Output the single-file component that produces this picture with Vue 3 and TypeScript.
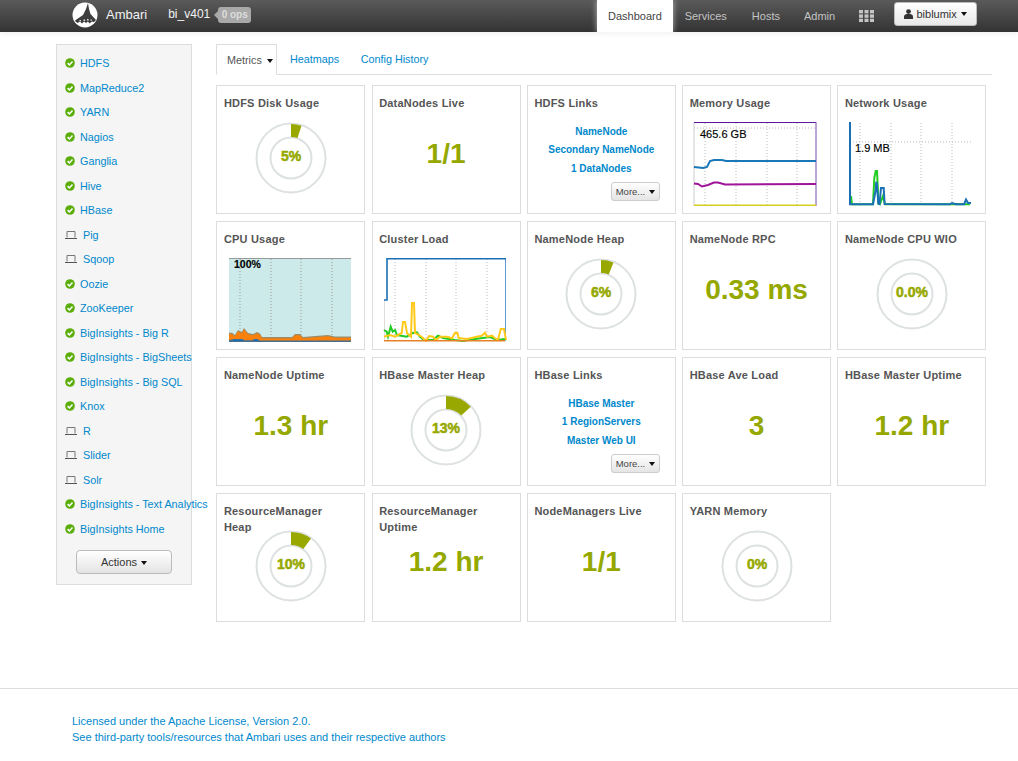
<script setup lang="ts">
interface Service { name: string; ok: boolean }
const services: Service[] = [
  { name: 'HDFS', ok: true }, { name: 'MapReduce2', ok: true }, { name: 'YARN', ok: true },
  { name: 'Nagios', ok: true }, { name: 'Ganglia', ok: true }, { name: 'Hive', ok: true },
  { name: 'HBase', ok: true }, { name: 'Pig', ok: false }, { name: 'Sqoop', ok: false },
  { name: 'Oozie', ok: true }, { name: 'ZooKeeper', ok: true }, { name: 'BigInsights - Big R', ok: true },
  { name: 'BigInsights - BigSheets', ok: true }, { name: 'BigInsights - Big SQL', ok: true },
  { name: 'Knox', ok: true }, { name: 'R', ok: false }, { name: 'Slider', ok: false }, { name: 'Solr', ok: false },
  { name: 'BigInsights - Text Analytics', ok: true }, { name: 'BigInsights Home', ok: true }
]

interface Widget {
  title: string
  kind: 'donut' | 'big' | 'links' | 'memory' | 'network' | 'cpu' | 'cluster'
  pct?: number
  label?: string
  links?: string[]
}
const widgets: Widget[] = [
  { title: 'HDFS Disk Usage', kind: 'donut', pct: 5, label: '5%' },
  { title: 'DataNodes Live', kind: 'big', label: '1/1' },
  { title: 'HDFS Links', kind: 'links', links: ['NameNode', 'Secondary NameNode', '1 DataNodes'] },
  { title: 'Memory Usage', kind: 'memory' },
  { title: 'Network Usage', kind: 'network' },
  { title: 'CPU Usage', kind: 'cpu' },
  { title: 'Cluster Load', kind: 'cluster' },
  { title: 'NameNode Heap', kind: 'donut', pct: 6, label: '6%' },
  { title: 'NameNode RPC', kind: 'big', label: '0.33 ms' },
  { title: 'NameNode CPU WIO', kind: 'donut', pct: 0, label: '0.0%' },
  { title: 'NameNode Uptime', kind: 'big', label: '1.3 hr' },
  { title: 'HBase Master Heap', kind: 'donut', pct: 13, label: '13%' },
  { title: 'HBase Links', kind: 'links', links: ['HBase Master', '1 RegionServers', 'Master Web UI'] },
  { title: 'HBase Ave Load', kind: 'big', label: '3' },
  { title: 'HBase Master Uptime', kind: 'big', label: '1.2 hr' },
  { title: 'ResourceManager Heap', kind: 'donut', pct: 10, label: '10%' },
  { title: 'ResourceManager Uptime', kind: 'big', label: '1.2 hr' },
  { title: 'NodeManagers Live', kind: 'big', label: '1/1' },
  { title: 'YARN Memory', kind: 'donut', pct: 0, label: '0%' }
]

function wedge(pct: number): string {
  const a = (pct / 100) * Math.PI * 2
  const cx = 40, cy = 40, ro = 34, ri = 21
  const s = Math.sin(a), c = Math.cos(a)
  const large = pct > 50 ? 1 : 0
  return `M${cx} ${cy - ro}A${ro} ${ro} 0 ${large} 1 ${cx + ro * s} ${cy - ro * c}L${cx + ri * s} ${cy - ri * c}A${ri} ${ri} 0 ${large} 0 ${cx} ${cy - ri}Z`
}

const memBlue = '694,167 703,168 707,167 710,161 714,160 722,160 726,161 816,161'
const memPurple = '694,183.5 698,184 702,186.5 708,185 714,182.5 718,182.5 725,184.5 816,184'
const netGreen = '851,196 852,204.3 873,204.3 874.3,178 875.7,171 877,171 878.5,204 880,204 883,196 885,204.3 950,204.3 952,204 970,204.3'
const netBlue = '850,122 850,204.3 873,204.3 875.7,190 876.3,181.7 877,185 878.3,203.3 879.5,204 881,188 883.7,188 884.6,204 950,204.3 952,203 956,204.3 964,204.3 966,199.5 968,203 971,203'
const cpuTop = '229,332.7 232,332.7 235,335 238,330 241.7,332 244,328 248,333 253,334 257,332 260,333.5 262,337 292,337 295,334 300,334 303,337 315,336 328,335 335,336.5 351,336.5'
const cpuGrey = `229,342 ${cpuTop} 351,342`
const cpuOrange = '229,341 229,334 232,334 235,336.3 238,331.3 241.7,333.3 244,329.3 248,334.3 253,335.3 257,333.3 260,334.8 262,338.3 292,338.3 295,335.3 300,335.3 303,338.3 315,337.3 328,336.3 335,337.8 351,337.8 351,341'
const cpuBlue = '229,342 229,340 233,339.2 243,339.5 245,340.3 252,340.3 254,339.2 258,339.5 260,340.5 351,340.5 351,342'
const clusterGreen = '384,330 386.7,331.7 388,336.7 390.7,326.7 392.7,331.7 395,330 397,335 406.7,336.7 413,333 417,332.3 420,336.7 424,340 433,340 438,335.7 443,338 455,340 463,341 475,339 490,337 497,340 505,339'
const clusterYellow = '384,336.7 390,335 395,336.7 401.7,333 403,322 405,322 407,333 411,336.7 412,303 414,303 415,333 421.7,336.7 426,341 429,336 433,336.7 436,340 440,336.7 447,336.7 452,338.3 455,332.7 457.3,332.7 458.7,338 467,339 476.7,336.7 481.7,335.7 485,332.7 487,336.7 492,335.7 495,338.3 498,340 500.7,329 504,329 506,340'
</script>

<template>
  <div class="page">
    <header class="nav">
      <svg class="logo" width="26" height="26" viewBox="0 0 26 26">
        <circle cx="13" cy="13" r="12.5" fill="#fff" />
        <path d="M16 1 L17 7 L18.5 12 L24 18 L22 20 C18 23 8 23 4 20 L3 18.5 L11 13 L14 7 Z" fill="#3d3d3d" />
        <path d="M3.5 20.5C7 25 19 25 22.5 20.5L20 19.5 17.5 21.5 16 19.5 14 21 12 19.5 10 21.5 8 19.5 5.5 21Z" fill="#fff" />
        <path d="M11.5 17.5h1.6v1.5h-1.6zM15 17h1.6v1.5H15zM7.5 18h1.5v1.3H7.5zM18.5 17.5h1.4v1.3h-1.4z" fill="#ddd" />
      </svg>
      <span class="brand">Ambari</span>
      <span class="cluster">bi_v401</span>
      <span class="ops">0 ops</span>
      <nav class="menu">
        <a class="active">Dashboard</a>
        <a>Services</a>
        <a class="hosts">Hosts</a>
        <a>Admin</a>
        <svg class="apps" width="15" height="12" viewBox="0 0 15 12">
          <g fill="#c4c4c4">
            <rect x="0" y="0" width="4" height="3.4" /><rect x="5.5" y="0" width="4" height="3.4" /><rect x="11" y="0" width="4" height="3.4" />
            <rect x="0" y="4.4" width="4" height="3.4" /><rect x="5.5" y="4.4" width="4" height="3.4" /><rect x="11" y="4.4" width="4" height="3.4" />
            <rect x="0" y="8.7" width="4" height="3.3" /><rect x="5.5" y="8.7" width="4" height="3.3" /><rect x="11" y="8.7" width="4" height="3.3" />
          </g>
        </svg>
        <button class="user" type="button">
          <svg width="9" height="10" viewBox="0 0 9 10">
            <circle cx="4.5" cy="2.6" r="2.4" fill="#333" />
            <path d="M0 10 V7.6 C0 6 1.6 5.4 3 5 H6 C7.4 5.4 9 6 9 7.6 V10 Z" fill="#333" />
          </svg>
          <span>biblumix</span>
          <i class="caret"></i>
        </button>
      </nav>
    </header>

    <main class="main">
      <aside class="side">
        <ul class="svc">
          <li v-for="s in services" :key="s.name" :class="{ off: !s.ok }">
            <svg v-if="s.ok" class="chk" width="10" height="10" viewBox="0 0 10 10">
              <circle cx="5" cy="5" r="4.8" fill="#5bad0a" />
              <path d="M2.6 5.1 L4.4 6.9 L7.5 3.6" fill="none" stroke="#fff" stroke-width="1.5" />
            </svg>
            <svg v-else class="lap" width="12" height="10" viewBox="0 0 12 10">
              <path d="M2 7.5 V1.5 H10 V7.5" fill="none" stroke="#777" />
              <path d="M0 8.5 H12" stroke="#555" />
            </svg>
            <a>{{ s.name }}</a>
          </li>
        </ul>
        <button class="actions" type="button">Actions <i class="caret"></i></button>
      </aside>

      <section class="content">
        <div class="tabs">
          <a class="tab on">Metrics <i class="caret"></i></a>
          <a class="tab">Heatmaps</a>
          <a class="tab">Config History</a>
        </div>
        <div class="grid">
          <article v-for="w in widgets" :key="w.title" class="card">
            <h3 class="title">{{ w.title }}</h3>

            <div v-if="w.kind === 'donut'" class="donut">
              <svg width="80" height="80" viewBox="0 0 80 80">
                <circle cx="40" cy="40" r="34.5" fill="none" stroke="#dde1e1" stroke-width="2" />
                <circle cx="40" cy="40" r="20.5" fill="none" stroke="#dde1e1" stroke-width="2" />
                <path v-if="w.pct" :d="wedge(w.pct)" fill="#99a800" />
                <text x="40" y="43" text-anchor="middle" class="pct">{{ w.label }}</text>
              </svg>
            </div>

            <div v-else-if="w.kind === 'big'" class="big">{{ w.label }}</div>

            <div v-else-if="w.kind === 'links'" class="links">
              <a v-for="l in w.links" :key="l">{{ l }}</a>
              <button class="more" type="button">More... <i class="caret"></i></button>
            </div>

            <svg v-else-if="w.kind === 'memory'" class="chart" viewBox="683 118 147 95" width="147" height="95">
              <path d="M705 123V206M736 123V206M767 123V206M797 123V206M694 128H816" stroke="#bbb" stroke-dasharray="1 2" fill="none" />
              <path d="M694 206V122" stroke="#ccc" fill="none" />
              <path d="M694 122.5H816" stroke="#5a189a" stroke-width="1.2" fill="none" />
              <path d="M816 122V206" stroke="#7a4db0" fill="none" />
              <polyline :points="memBlue" fill="none" stroke="#1a78b8" stroke-width="2" />
              <polyline :points="memPurple" fill="none" stroke="#a0149a" stroke-width="2" />
              <path d="M694 205.3H816" stroke="#d7cf1e" stroke-width="1.6" fill="none" />
              <text x="700" y="138" class="lbl">465.6 GB</text>
            </svg>

            <svg v-else-if="w.kind === 'network'" class="chart" viewBox="838 118 147 95" width="147" height="95">
              <path d="M860 123V206M891 123V206M921 123V206M952 123V206M850 142H971" stroke="#bbb" stroke-dasharray="1 2" fill="none" />
              <polyline :points="netGreen" fill="none" stroke="#22cc22" stroke-width="2" />
              <polyline :points="netBlue" fill="none" stroke="#1a6fb5" stroke-width="2" />
              <text x="855" y="152" class="lbl">1.9 MB</text>
            </svg>

            <svg v-else-if="w.kind === 'cpu'" class="chart" viewBox="217 254 147 95" width="147" height="95">
              <rect x="229" y="258" width="122" height="84" fill="#cdeaea" />
              <path d="M229 258.5H351" stroke="#999" fill="none" />
              <path d="M240 259V342M271 259V342M301 259V342M332 259V342" stroke="#999" stroke-dasharray="1 2" fill="none" />
              <polygon :points="cpuGrey" fill="#9a8d6a" />
              <polygon :points="cpuOrange" fill="#f7810c" />
              <polygon :points="cpuBlue" fill="#4a6f8c" />
              <path d="M233 339.2H243V341H233ZM254 339.2H258V341H254Z" fill="#1a6fb5" />
              <text x="234" y="268" class="lbl bold">100%</text>
            </svg>

            <svg v-else class="chart" viewBox="373 254 147 95" width="147" height="95">
              <path d="M395 259V342M426 259V342M456 259V342M487 259V342" stroke="#bbb" stroke-dasharray="1 2" fill="none" />
              <path d="M384.5 300V341" stroke="#ddd" fill="none" />
              <path d="M505.5 258V341" stroke="#5a9ad0" fill="none" />
              <path d="M384 300H387V258.8H506" stroke="#1a6fb5" stroke-width="1.6" fill="none" />
              <polyline :points="clusterGreen" fill="none" stroke="#22cc22" stroke-width="2" />
              <polyline :points="clusterYellow" fill="none" stroke="#ffc91a" stroke-width="2" />
              <path d="M384 340.7H505" stroke="#e8812a" stroke-width="1.4" fill="none" />
            </svg>
          </article>
        </div>
      </section>
    </main>

    <footer class="foot">
      <a>Licensed under the Apache License, Version 2.0.</a>
      <a>See third-party tools/resources that Ambari uses and their respective authors</a>
    </footer>
  </div>
</template>

<style>
body { margin: 0; background: #fff; }
</style>

<style scoped>
.page {
  font-family: "Liberation Sans", Arial, sans-serif;
  font-size: 11px;
  color: #555;
  width: 1018px;
}
a { color: #0088cc; text-decoration: none; cursor: pointer; }
.caret {
  display: inline-block;
  width: 0;
  height: 0;
  border-left: 3.5px solid transparent;
  border-right: 3.5px solid transparent;
  border-top: 4px solid #111;
  vertical-align: middle;
  margin-left: 1px;
}
.nav {
  height: 32px;
  display: flex;
  align-items: center;
  padding-left: 72px;
  background: linear-gradient(#5a5a5a, #333);
  box-shadow: 0 1px 6px rgba(0, 0, 0, 0.08);
  color: #fff;
  box-sizing: border-box;
}
.logo { margin-top: -3px; }
.brand { font-size: 13px; margin-left: 8px; margin-top: -4px; color: #f2f2f2; }
.cluster { font-size: 12px; margin-left: 21px; margin-top: -4px; color: #f2f2f2; }
.ops {
  position: relative;
  margin-left: 8px;
  margin-top: -2px;
  height: 16px;
  line-height: 16px;
  width: 33px;
  text-align: center;
  background: #a9a9a9;
  border-radius: 3px;
  font-size: 10px;
  font-weight: 700;
  color: #ddd;
}
.ops::before {
  content: "";
  position: absolute;
  left: -4px;
  top: 4px;
  border-top: 4px solid transparent;
  border-bottom: 4px solid transparent;
  border-right: 4px solid #a9a9a9;
}
.menu {
  display: flex;
  align-items: center;
  height: 32px;
  margin-left: 346px;
}
.menu a {
  padding: 0 12px;
  line-height: 32px;
  color: #c4c4c4;
  font-size: 11px;
}
.menu a.active {
  padding: 0 10.8px;
  background: #fff;
  color: #444;
  box-shadow: 0 0 6px rgba(255, 255, 255, 0.6);
}
.menu a.hosts { padding-left: 13px; }
.apps { margin-left: 12px; margin-top: -1px; }
.user {
  margin-left: 20px;
  margin-top: -4px;
  width: 83px;
  height: 24px;
  box-sizing: border-box;
  padding: 0;
  display: flex;
  align-items: center;
  justify-content: center;
  gap: 3px;
  font: 11px "Liberation Sans", Arial, sans-serif;
  color: #333;
  background: linear-gradient(#fff, #e8e8e8);
  border: 1px solid #bbb;
  border-radius: 3px;
}
.main {
  display: flex;
  align-items: flex-start;
  padding: 12px 0 0 56px;
}
.side {
  width: 136px;
  height: 541px;
  box-sizing: border-box;
  background: #f5f5f5;
  border: 1px solid #ddd;
  padding-top: 6.1px;
}
.svc { list-style: none; margin: 0; padding: 0; }
.svc li {
  height: 24.5px;
  display: flex;
  align-items: center;
  padding-left: 8px;
  white-space: nowrap;
  font-size: 10.8px;
}
.chk { margin-right: 5px; flex: none; }
.lap { margin-right: 6px; flex: none; }
.actions {
  display: block;
  margin: 8.9px auto 0;
  width: 96px;
  height: 24px;
  padding: 0;
  font: 11px "Liberation Sans", Arial, sans-serif;
  color: #333;
  background: linear-gradient(#fff, #e4e4e4);
  border: 1px solid #bbb;
  border-radius: 4px;
}
.content { margin-left: 24px; width: 776px; }
.tabs {
  display: flex;
  height: 31px;
  box-sizing: border-box;
  border-bottom: 1px solid #ddd;
}
.tab {
  padding: 0 8.5px 0 13px;
  line-height: 30px;
  font-size: 10.8px;
  height: 31px;
  box-sizing: border-box;
}
.tab.on {
  width: 61px;
  padding: 0 0 0 10px;
  color: #555;
  background: #fff;
  border: 1px solid #ddd;
  border-bottom-color: #fff;
  white-space: nowrap;
}
.tab.on .caret { margin-left: 2px; }
.grid {
  display: grid;
  grid-template-columns: repeat(5, 149px);
  grid-auto-rows: 129px;
  column-gap: 6.25px;
  row-gap: 7px;
  margin-top: 10px;
  padding-left: 0.3px;
}
.card {
  box-sizing: border-box;
  border: 1px solid #ddd;
  background: #fff;
  min-width: 0;
}
.title {
  margin: 0;
  height: 32px;
  box-sizing: border-box;
  padding: 9px 20px 0 6.6px;
  font-size: 11px;
  line-height: 16px;
  font-weight: 700;
  letter-spacing: 0.2px;
  color: #555;
  position: relative;
  z-index: 1;
}
.donut { display: flex; justify-content: center; }
.donut svg { display: block; }
.pct {
  font: 700 14px "Liberation Sans", Arial, sans-serif;
  fill: #95a800;
  stroke: #95a800;
  stroke-width: 0.5;
}
.big {
  height: 72px;
  display: flex;
  align-items: center;
  justify-content: center;
  font-size: 28px;
  font-weight: 700;
  color: #95a800;
}
.links {
  display: flex;
  flex-direction: column;
  align-items: center;
  padding-top: 4.5px;
}
.links a {
  line-height: 18.5px;
  font-size: 10px;
  font-weight: 700;
}
.more {
  align-self: flex-end;
  margin: 3.5px 15px 0 0;
  width: 49px;
  height: 19px;
  padding: 0;
  font: 9.5px "Liberation Sans", Arial, sans-serif;
  color: #444;
  background: linear-gradient(#fff, #e4e4e4);
  border: 1px solid #ccc;
  border-radius: 3px;
}
.chart { display: block; }
.lbl { font: 11px "Liberation Sans", Arial, sans-serif; fill: #000; stroke: #000; stroke-width: 0.15; }
.lbl.bold { font-weight: 700; font-size: 10.5px; }
.foot {
  margin-top: 66px;
  border-top: 1px solid #ddd;
  padding: 24px 0 16px 72px;
  display: flex;
  flex-direction: column;
  line-height: 16px;
  font-size: 11px;
}
</style>
